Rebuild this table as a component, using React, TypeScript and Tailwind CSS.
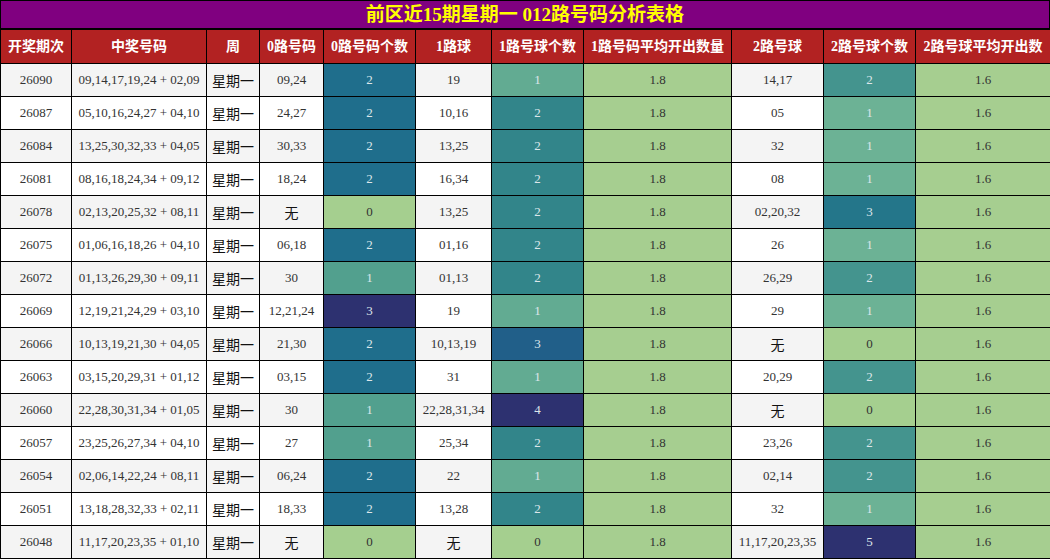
import React from 'react';

interface Row {
  issue: string;
  numbers: string;
  zero: string;
  zeroCount: number;
  one: string;
  oneCount: number;
  two: string;
  twoCount: number;
}

const rows: Row[] = [
  { issue: '26090', numbers: '09,14,17,19,24 + 02,09', zero: '09,24', zeroCount: 2, one: '19', oneCount: 1, two: '14,17', twoCount: 2 },
  { issue: '26087', numbers: '05,10,16,24,27 + 04,10', zero: '24,27', zeroCount: 2, one: '10,16', oneCount: 2, two: '05', twoCount: 1 },
  { issue: '26084', numbers: '13,25,30,32,33 + 04,05', zero: '30,33', zeroCount: 2, one: '13,25', oneCount: 2, two: '32', twoCount: 1 },
  { issue: '26081', numbers: '08,16,18,24,34 + 09,12', zero: '18,24', zeroCount: 2, one: '16,34', oneCount: 2, two: '08', twoCount: 1 },
  { issue: '26078', numbers: '02,13,20,25,32 + 08,11', zero: '无', zeroCount: 0, one: '13,25', oneCount: 2, two: '02,20,32', twoCount: 3 },
  { issue: '26075', numbers: '01,06,16,18,26 + 04,10', zero: '06,18', zeroCount: 2, one: '01,16', oneCount: 2, two: '26', twoCount: 1 },
  { issue: '26072', numbers: '01,13,26,29,30 + 09,11', zero: '30', zeroCount: 1, one: '01,13', oneCount: 2, two: '26,29', twoCount: 2 },
  { issue: '26069', numbers: '12,19,21,24,29 + 03,10', zero: '12,21,24', zeroCount: 3, one: '19', oneCount: 1, two: '29', twoCount: 1 },
  { issue: '26066', numbers: '10,13,19,21,30 + 04,05', zero: '21,30', zeroCount: 2, one: '10,13,19', oneCount: 3, two: '无', twoCount: 0 },
  { issue: '26063', numbers: '03,15,20,29,31 + 01,12', zero: '03,15', zeroCount: 2, one: '31', oneCount: 1, two: '20,29', twoCount: 2 },
  { issue: '26060', numbers: '22,28,30,31,34 + 01,05', zero: '30', zeroCount: 1, one: '22,28,31,34', oneCount: 4, two: '无', twoCount: 0 },
  { issue: '26057', numbers: '23,25,26,27,34 + 04,10', zero: '27', zeroCount: 1, one: '25,34', oneCount: 2, two: '23,26', twoCount: 2 },
  { issue: '26054', numbers: '02,06,14,22,24 + 08,11', zero: '06,24', zeroCount: 2, one: '22', oneCount: 1, two: '02,14', twoCount: 2 },
  { issue: '26051', numbers: '13,18,28,32,33 + 02,11', zero: '18,33', zeroCount: 2, one: '13,28', oneCount: 2, two: '32', twoCount: 1 },
  { issue: '26048', numbers: '11,17,20,23,35 + 01,10', zero: '无', zeroCount: 0, one: '无', oneCount: 0, two: '11,17,20,23,35', twoCount: 5 },
];

// each count column is shaded on its own scale
const zeroColors: Record<number, string> = {
  0: 'bg-[#a5cf8f] text-[#333]',
  1: 'bg-[#52a08e] text-[#dde6ea]',
  2: 'bg-[#1f6e8c] text-[#dde6ea]',
  3: 'bg-[#2d3170] text-[#dde6ea]',
};
const oneColors: Record<number, string> = {
  0: 'bg-[#a5cf8f] text-[#333]',
  1: 'bg-[#62ab92] text-[#dde6ea]',
  2: 'bg-[#32858a] text-[#dde6ea]',
  3: 'bg-[#215f89] text-[#dde6ea]',
  4: 'bg-[#2d3170] text-[#dde6ea]',
};
const twoColors: Record<number, string> = {
  0: 'bg-[#a5cf8f] text-[#333]',
  1: 'bg-[#6cb295] text-[#dde6ea]',
  2: 'bg-[#44948e] text-[#dde6ea]',
  3: 'bg-[#24768a] text-[#dde6ea]',
  5: 'bg-[#2d3170] text-[#dde6ea]',
};

const headers = ['开奖期次', '中奖号码', '周', '0路号码', '0路号码个数', '1路球', '1路号球个数', '1路号码平均开出数量', '2路号球', '2路号球个数', '2路号球平均开出数'];

const widths = ['w-[71px]', 'w-[135px]', 'w-[53px]', 'w-[64px]', 'w-[92px]', 'w-[76px]', 'w-[92px]', 'w-[148px]', 'w-[92px]', 'w-[92px]', 'w-[135px]'];

export default function App() {
  const font = { fontFamily: '"Liberation Serif", "Noto Sans CJK SC", serif' };

  return (
    <div className="w-[1050px] h-[560px] overflow-hidden bg-white" style={font}>
      <div className="h-[29px] border border-black bg-[#800080] flex items-center justify-center">
        <span className="text-[19px] font-bold text-[#ffff00] leading-none">前区近15期星期一 012路号码分析表格</span>
      </div>
      <table className="w-[1050px] table-fixed border-collapse">
        <colgroup>
          {widths.map((w, i) => (
            <col key={i} className={w} />
          ))}
        </colgroup>
        <thead>
          <tr>
            {headers.map((h) => (
              <th key={h} className="h-[34px] border border-black bg-[#b22222] text-white text-[14px] font-bold text-center whitespace-nowrap p-0">
                {h}
              </th>
            ))}
          </tr>
        </thead>
        <tbody>
          {rows.map((r, i) => {
            const base = i % 2 === 0 ? 'bg-[#f4f4f4]' : 'bg-white';
            const cell = 'h-[33px] border border-black text-center text-[13px] p-0 whitespace-nowrap';
            const cjk = 'text-[14px] text-[#111] pt-[3px]';
            return (
              <tr key={r.issue} className="text-[#333]">
                <td className={`${cell} ${base}`}>{r.issue}</td>
                <td className={`${cell} ${base}`}>{r.numbers}</td>
                <td className={`${cell} ${base} ${cjk}`}>星期一</td>
                <td className={`${cell} ${base} ${r.zero === '无' ? cjk : ''}`}>{r.zero}</td>
                <td className={`${cell} ${zeroColors[r.zeroCount]}`}>{r.zeroCount}</td>
                <td className={`${cell} ${base} ${r.one === '无' ? cjk : ''}`}>{r.one}</td>
                <td className={`${cell} ${oneColors[r.oneCount]}`}>{r.oneCount}</td>
                <td className={`${cell} bg-[#a6ce90]`}>1.8</td>
                <td className={`${cell} ${base} ${r.two === '无' ? cjk : ''}`}>{r.two}</td>
                <td className={`${cell} ${twoColors[r.twoCount]}`}>{r.twoCount}</td>
                <td className={`${cell} bg-[#a6ce90]`}>1.6</td>
              </tr>
            );
          })}
        </tbody>
      </table>
    </div>
  );
}
